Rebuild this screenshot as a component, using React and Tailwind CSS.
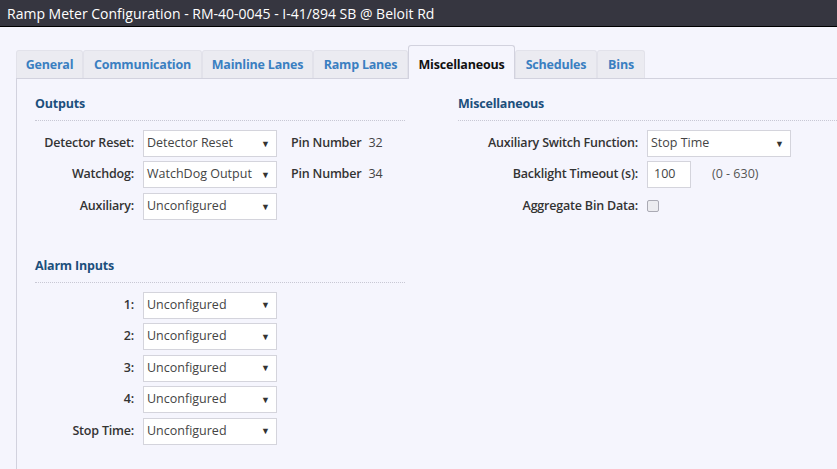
import React from 'react';

const tabs = [
  { name: 'General', w: 'w-[67px]' },
  { name: 'Communication', w: 'w-[119px]' },
  { name: 'Mainline Lanes', w: 'w-[111px]' },
  { name: 'Ramp Lanes', w: 'w-[95px]' },
  { name: 'Miscellaneous', w: 'w-[107px]', active: true },
  { name: 'Schedules', w: 'w-[82px]' },
  { name: 'Bins', w: 'w-[48px]' },
];

const Select = ({ value, w = 'w-[134px]' }) => (
  <div className={`${w} h-[27px] bg-white border border-[#d4d4dc] flex items-center justify-between pl-[3px] pr-[6px] text-[12.5px] text-[#444]`}>
    <span className="whitespace-nowrap">{value}</span>
    <span className="text-[9px] text-[#333]">▼</span>
  </div>
);

const Heading = ({ children }) => (
  <div className="border-b border-dotted border-[#c8c8d4] pb-[6px] mb-[9px]">
    <h3 className="text-[12.5px] font-bold text-[#1c4f7c] tracking-[-0.2px]">{children}</h3>
  </div>
);

const Row = ({ label, labelW = 'w-[99px]', children }) => (
  <div className="flex items-center gap-[9px] h-[27px] mb-[4.5px]">
    <label className={`${labelW} shrink-0 whitespace-nowrap text-right text-[12.5px] font-semibold text-[#333] tracking-[-0.2px]`}>{label}</label>
    {children}
  </div>
);

const App = () => {
  return (
    <div className="w-[837px] h-[469px] overflow-hidden bg-[#f5f5fd] font-['Segoe_UI','Open_Sans',sans-serif]">
      <div className="h-[27px] bg-[#363640] border-b border-black flex items-center pl-[7px] text-white text-[14px]">
        Ramp Meter Configuration - RM-40-0045 - I-41/894 SB @ Beloit Rd
      </div>

      <div className="pt-[18px] pl-[16px]">
        <div className="flex items-end h-[34px] border-b border-[#d2d2de]">
          {tabs.map(t => (
            <div
              key={t.name}
              className={`${t.w} flex items-center justify-center text-[12.5px] font-bold tracking-[-0.2px] rounded-t-[3px] border border-b-0 ${
                t.active
                  ? 'h-[34px] -mb-px pt-[5px] bg-[#f5f5fd] border-[#d2d2de] text-[#111]'
                  : 'h-[28px] pt-[2px] bg-[#ebebf1] border-[#e2e2ea] text-[#3a7fc1]'
              }`}
            >
              {t.name}
            </div>
          ))}
        </div>

        <div className="border-l border-[#d2d2de] h-[400px] pl-[18px] pt-[16px] flex gap-[53px]">
          <div className="w-[370px]">
            <Heading>Outputs</Heading>
            <Row label="Detector Reset:">
              <Select value="Detector Reset" />
              <span className="ml-[5px] text-[12.5px] font-semibold text-[#333] tracking-[-0.2px]">Pin Number</span>
              <span className="ml-[-2px] text-[12.5px] text-[#444]">32</span>
            </Row>
            <Row label="Watchdog:">
              <Select value="WatchDog Output" />
              <span className="ml-[5px] text-[12.5px] font-semibold text-[#333] tracking-[-0.2px]">Pin Number</span>
              <span className="ml-[-2px] text-[12.5px] text-[#444]">34</span>
            </Row>
            <Row label="Auxiliary:">
              <Select value="Unconfigured" />
            </Row>

            <div className="mt-[37px]">
              <Heading>Alarm Inputs</Heading>
              {['1:', '2:', '3:', '4:', 'Stop Time:'].map(l => (
                <Row key={l} label={l}>
                  <Select value="Unconfigured" />
                </Row>
              ))}
            </div>
          </div>

          <div className="flex-1">
            <Heading>Miscellaneous</Heading>
            <Row label="Auxiliary Switch Function:" labelW="w-[180px]">
              <Select value="Stop Time" w="w-[144px]" />
            </Row>
            <Row label="Backlight Timeout (s):" labelW="w-[180px]">
              <div className="w-[44px] h-[27px] bg-white border border-[#d4d4dc] flex items-center pl-[6px] text-[12.5px] text-[#444]">100</div>
              <span className="ml-[12px] text-[12.5px] text-[#555]">(0 - 630)</span>
            </Row>
            <Row label="Aggregate Bin Data:" labelW="w-[180px]">
              <div className="w-[12px] h-[12px] bg-[#ececf0] border border-[#aaaab4] rounded-[2px]" />
            </Row>
          </div>
        </div>
      </div>
    </div>
  );
};

export default App;
